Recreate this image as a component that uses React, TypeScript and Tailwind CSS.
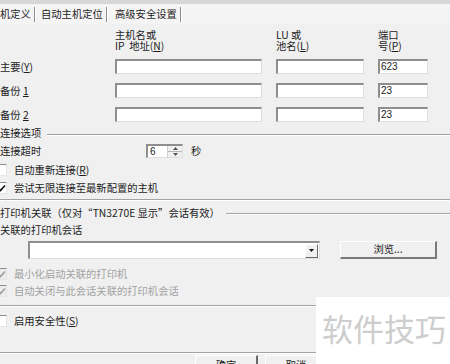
import React from 'react';

const font = { fontFamily: '"Noto Sans CJK SC", "Noto Sans", sans-serif' };

const U: React.FC<{ children: React.ReactNode }> = ({ children }) => <span className="underline underline-offset-1">{children}</span>;

const Sunken: React.FC<{ className?: string; children?: React.ReactNode }> = ({ className = '', children }) => (
  <div
    className={`bg-white border-t-2 border-l-2 border-r border-b border-t-[#8e8e8e] border-l-[#8e8e8e] border-r-[#dedede] border-b-[#dedede] flex items-center ${className}`}
  >
    {children}
  </div>
);

const Etched: React.FC<{ className?: string }> = ({ className = '' }) => (
  <div className={`h-[2px] border-t border-t-[#a3a3a3] border-b border-b-white ${className}`} />
);

const Check: React.FC<{ checked?: boolean; disabled?: boolean }> = ({ checked, disabled }) => (
  <div
    className={`w-[12px] h-[12px] -ml-[5px] mr-[7px] shrink-0 border-t border-l border-t-[#8e8e8e] border-l-[#8e8e8e] border-r border-b border-r-[#e5e5e5] border-b-[#e5e5e5] ${
      disabled ? 'bg-[#ececec]' : 'bg-white'
    } flex items-center justify-center`}
  >
    {checked && (
      <svg width="9" height="9" viewBox="0 0 9 9">
        <path d="M1 4 L3.5 6.5 L8 1.5" fill="none" stroke={disabled ? '#a0a0a0' : '#111'} strokeWidth="1.6" />
      </svg>
    )}
  </div>
);

const Tab: React.FC<{ children: React.ReactNode; className?: string }> = ({ children, className = '' }) => (
  <div className={`flex items-center h-full ${className}`}>
    <span>{children}</span>
    <span className="ml-[3px] h-[15px] w-[2px] border-l border-l-[#8c8c8c] border-r border-r-white" />
  </div>
);

export default function App() {
  return (
    <div
      className="w-[450px] h-[364px] bg-[#f0f0f0] overflow-hidden relative text-[10.3px] leading-none text-[#1c1c1c]"
      style={font}
    >
      <div className="h-[4px] bg-[#d7d7d7]" />

      {/* tabs */}
      <div className="h-[20px] flex items-center bg-[#f4f4f4]">
        <Tab className="w-[39px]">机定义</Tab>
        <Tab className="pl-[2px] w-[72px]">自动主机定位</Tab>
        <Tab className="pl-[4px]">高级安全设置</Tab>
      </div>

      {/* column headers */}
      <div className="mt-[5px] h-[22px] grid grid-cols-[115px_147px_14px_88px_14px_50px] leading-[11px]">
        <div />
        <div>
          <div>主机名或</div>
          <div className="whitespace-pre">IP  地址(<U>N</U>)</div>
        </div>
        <div />
        <div>
          <div>LU 或</div>
          <div>池名(<U>L</U>)</div>
        </div>
        <div />
        <div>
          <div>端口</div>
          <div>号(<U>P</U>)</div>
        </div>
      </div>

      {/* host rows */}
      <div className="mt-[8px] flex flex-col gap-[9px]">
        {[
          { label: <>主要(<U>Y</U>)</>, port: '623' },
          { label: <>备份 <U>1</U></>, port: '23' },
          { label: <>备份 <U>2</U></>, port: '23' },
        ].map((r, i) => (
          <div key={i} className="h-[15px] grid grid-cols-[115px_147px_14px_88px_14px_50px] items-center">
            <div className="pt-[1px]">{r.label}</div>
            <Sunken className="h-[15px]" />
            <div />
            <Sunken className="h-[15px]" />
            <div />
            <Sunken className="h-[15px] pl-[1px]">
              <span className="text-[10px] text-[#222]" style={{ fontFamily: '"Liberation Sans", Arial, sans-serif' }}>
                {r.port}
              </span>
            </Sunken>
          </div>
        ))}
      </div>

      {/* connection options */}
      <div className="mt-[4px] h-[15px] flex items-center">
        <span>连接选项</span>
        <Etched className="flex-1 ml-[6px] mt-[2px]" />
      </div>
      <div className="mt-[3px] h-[14px] flex items-center">
        <span className="w-[146px]">连接超时</span>
        <Sunken className="h-[14px] w-[37px] pl-[2px]">
          <span className="text-[10px] flex-1" style={{ fontFamily: '"Liberation Sans", Arial, sans-serif' }}>
            6
          </span>
          <div className="w-[15px] h-full flex flex-col bg-[#f0f0f0] border-l border-l-[#cfcfcf]">
            <div className="flex-1 flex items-center justify-center border-b border-b-[#b8b8b8]">
              <svg width="5" height="3" viewBox="0 0 5 3">
                <path d="M0 3 L2.5 0 L5 3 Z" fill="#555" />
              </svg>
            </div>
            <div className="flex-1 flex items-center justify-center">
              <svg width="5" height="3" viewBox="0 0 5 3">
                <path d="M0 0 L2.5 3 L5 0 Z" fill="#555" />
              </svg>
            </div>
          </div>
        </Sunken>
        <span className="ml-[8px]">秒</span>
      </div>
      <div className="mt-[5px] h-[14px] flex items-center">
        <Check />
        <span>自动重新连接(<U>R</U>)</span>
      </div>
      <div className="mt-[4px] h-[14px] flex items-center">
        <Check checked />
        <span>尝试无限连接至最新配置的主机</span>
      </div>
      <Etched className="mt-[4px]" />

      {/* printer association */}
      <div className="mt-[5px] h-[14px] flex items-center">
        <span>打印机关联（仅对“TN3270E 显示”会话有效）</span>
        <Etched className="flex-1 ml-[6px] mt-[2px]" />
      </div>
      <div className="mt-[3px] h-[14px] flex items-center">关联的打印机会话</div>
      <div className="mt-[4px] h-[18px] flex items-center">
        <Sunken className="ml-[28px] w-[292px] h-[18px] justify-end pr-[1px]">
          <div className="w-[13px] h-[14px] bg-[#f0f0f0] border-t border-l border-t-white border-l-white border-r border-b border-r-[#6b6b6b] border-b-[#6b6b6b] flex items-center justify-center">
            <svg width="5" height="3" viewBox="0 0 5 3">
              <path d="M0 0 L2.5 3 L5 0 Z" fill="#111" />
            </svg>
          </div>
        </Sunken>
        <button className="ml-[20px] w-[97px] h-[18px] bg-[#f0f0f0] border-t border-l border-t-white border-l-white border-r-2 border-b-2 border-r-[#7a7a7a] border-b-[#7a7a7a] flex items-center justify-center">
          浏览...
        </button>
      </div>
      <div className="mt-[8px] h-[14px] flex items-center text-[#a2a2a2]">
        <Check checked disabled />
        <span>最小化启动关联的打印机</span>
      </div>
      <div className="mt-[3px] h-[14px] flex items-center text-[#a2a2a2]">
        <Check checked disabled />
        <span>自动关闭与此会话关联的打印机会话</span>
      </div>
      <Etched className="mt-[7px]" />

      <div className="mt-[7px] h-[14px] flex items-center">
        <Check />
        <span>启用安全性(<U>S</U>)</span>
      </div>
      <Etched className="mt-[24px]" />

      <div className="mt-[1px] flex gap-[7px] pl-[195px]">
        <button className="w-[63px] h-[22px] bg-[#f0f0f0] border-t border-l border-t-white border-l-white border-r-2 border-b-2 border-r-[#6b6b6b] border-b-[#6b6b6b] flex items-start justify-center pt-[4px]">
          确定
        </button>
        <button className="w-[63px] h-[22px] bg-[#f0f0f0] border-t border-l border-t-white border-l-white border-r-2 border-b-2 border-r-[#6b6b6b] border-b-[#6b6b6b] flex items-start justify-center pt-[4px]">
          取消
        </button>
      </div>

      {/* watermark */}
      <div className="absolute left-[316px] top-[297px] w-[134px] h-[67px] bg-white pl-[6px] pt-[15px]">
        <span className="text-[31px] leading-[31px] text-[#cdcdcd]">软件技巧</span>
      </div>
    </div>
  );
}
